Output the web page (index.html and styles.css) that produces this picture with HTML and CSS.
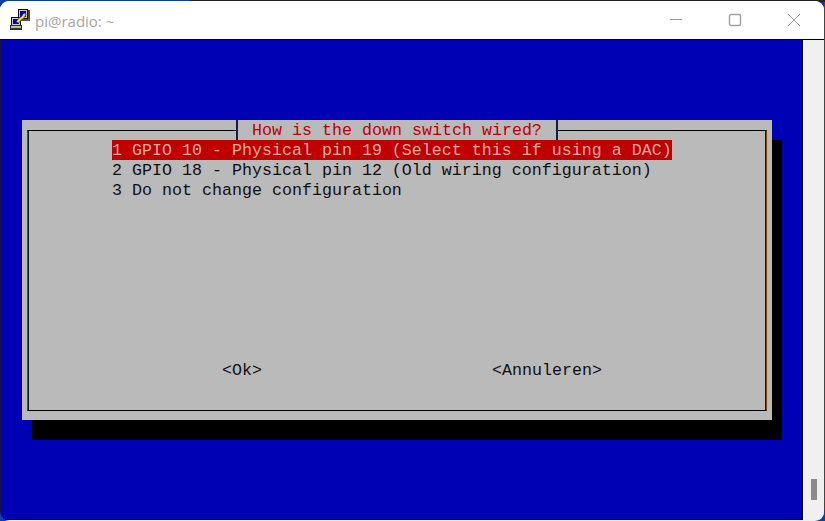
FILE: index.html
```html
<!DOCTYPE html>
<html lang="en">
<head>
<meta charset="utf-8">
<title>pi@radio: ~</title>
<link rel="stylesheet" href="styles.css">
</head>
<body>
<div class="desktop">
  <div class="window">
    <header class="titlebar">
      <svg class="app-icon" width="20" height="21" viewBox="0 0 20 21" shape-rendering="crispEdges">
        <rect x="8" y="0" width="10" height="10" fill="#111"/>
        <rect x="9" y="1" width="8" height="8" fill="#c8c8c8"/>
        <rect x="10" y="2" width="6" height="6" fill="#0000c0"/>
        <rect x="18" y="1" width="2" height="11" fill="#444"/>
        <rect x="9" y="10" width="11" height="2" fill="#555"/>
        <rect x="1" y="8" width="10" height="9" fill="#111"/>
        <rect x="2" y="9" width="8" height="7" fill="#c8c8c8"/>
        <rect x="3" y="10" width="6" height="5" fill="#0000c0"/>
        <rect x="0" y="16" width="12" height="5" fill="#333"/>
        <rect x="1" y="17" width="10" height="2" fill="#bbb"/>
        <path d="M6 13 L9 9 L11 8 L14 4 L16 5 L14 9 L11 11 L9 14 Z" fill="#f5e400" stroke="#222" stroke-width=".5" shape-rendering="auto"/>
      </svg>
      <span class="title">pi@radio: ~</span>
      <div class="controls">
        <svg class="ctl" width="14" height="14" viewBox="0 0 14 14"><path d="M1 6.5H13" stroke="#999" stroke-width="1"/></svg>
        <svg class="ctl" width="14" height="14" viewBox="0 0 14 14"><rect x="1.5" y="1.5" width="11" height="11" rx="1.5" fill="none" stroke="#a0a0a0" stroke-width="1.4"/></svg>
        <svg class="ctl" width="14" height="14" viewBox="0 0 14 14"><path d="M1 1L13 13M13 1L1 13" stroke="#999" stroke-width="1"/></svg>
      </div>
    </header>
    <div class="client">
      <main class="terminal">
        <section class="dialog">
          <div class="frame">
            <h1 class="dialog-title">How is the down switch wired?</h1>
            <ul class="menu">
              <li class="item selected">1 GPIO 10 - Physical pin 19 (Select this if using a DAC)</li>
              <li class="item">2 GPIO 18 - Physical pin 12 (Old wiring configuration)</li>
              <li class="item">3 Do not change configuration</li>
            </ul>
            <div class="buttons">
              <span class="btn">&lt;Ok&gt;</span>
              <span class="btn">&lt;Annuleren&gt;</span>
            </div>
          </div>
        </section>
      </main>
      <aside class="scrollbar"><div class="thumb"></div></aside>
    </div>
  </div>
</div>
</body>
</html>
```
FILE: styles.css
```css
* { box-sizing: border-box; }
html, body { margin: 0; padding: 0; }
body { width: 825px; height: 521px; overflow: hidden; }

.desktop {
  width: 825px;
  height: 521px;
  padding-top: 1px;
  background:
    linear-gradient(#222, #222) right top / 635px 2px no-repeat,
    linear-gradient(#444, #444) right top / 1px 510px no-repeat,
    #0b3fa8;
}

.window {
  width: 824px;
  height: 520px;
  display: flex;
  flex-direction: column;
  background: #f0f0f0;
  border-radius: 9px;
  overflow: hidden;
  padding-bottom: 1px;
}

.titlebar {
  flex: 0 0 38px;
  background: #fff;
  display: flex;
  align-items: center;
  padding-left: 10px;
}
.app-icon { flex: none; margin-right: 5px; margin-top: -1px; }
.title {
  font: 15px "Open Sans", "Liberation Sans", sans-serif;
  color: #a9a4a0;
  margin-top: 2px;
}
.controls {
  margin-left: auto;
  display: flex;
  gap: 45px;
  margin-right: 23px;
}
.ctl { display: block; }

.client {
  flex: 1;
  display: flex;
  border-top: 1px solid #000;
  min-height: 0;
}

.terminal {
  width: 803px;
  flex: none;
  background: #0000b4;
  border-left: 2px solid #12124a;
  border-right: 1px solid #000;
  border-bottom: 1px solid #000;
  padding: 80px 0 0 20px;
  font: 16.67px/20px "Liberation Mono", "Courier New", monospace;
}

.dialog {
  width: 750px;
  height: 300px;
  background: #bababa;
  box-shadow: 10px 20px 0 #000;
  padding: 10px 5px 9px;
}
.frame {
  height: 281px;
  border: 1px solid #000;
  border-left: 1px solid #7a4300;
  border-right: 1px solid #7a4300;
  box-shadow: inset 1px 0 0 #14202c, inset 2px 0 0 #8fc4c8, inset -1px 0 0 #14202c;
  display: flex;
  flex-direction: column;
  padding-top: 9px;
  position: relative;
}
.dialog-title {
  position: absolute;
  top: -11px;
  left: 208px;
  width: 322px;
  height: 20px;
  margin: 0;
  background: #bababa;
  border-left: 2px solid #1c1c40;
  border-right: 2px solid #1c1c40;
  padding: 1px 0 0 14px;
  font: inherit;
  color: #c00000;
  white-space: pre;
}
.menu {
  list-style: none;
  margin: 0;
  padding: 0 0 0 84px;
  color: #111;
}
.item { white-space: pre; height: 20px; padding-top: 1px; }
.selected {
  width: 560px;
  background: #c00000;
  color: #e0a8a0;
}
.buttons {
  margin-top: 160px;
  padding: 1px 0 0 194px;
  display: flex;
  gap: 230px;
  color: #111;
}
.scrollbar { flex: 1; position: relative; background: #f0f0f0; }
.thumb {
  position: absolute;
  left: 8px;
  top: 439px;
  width: 6px;
  height: 21px;
  background: #8b8b8b;
}
```
